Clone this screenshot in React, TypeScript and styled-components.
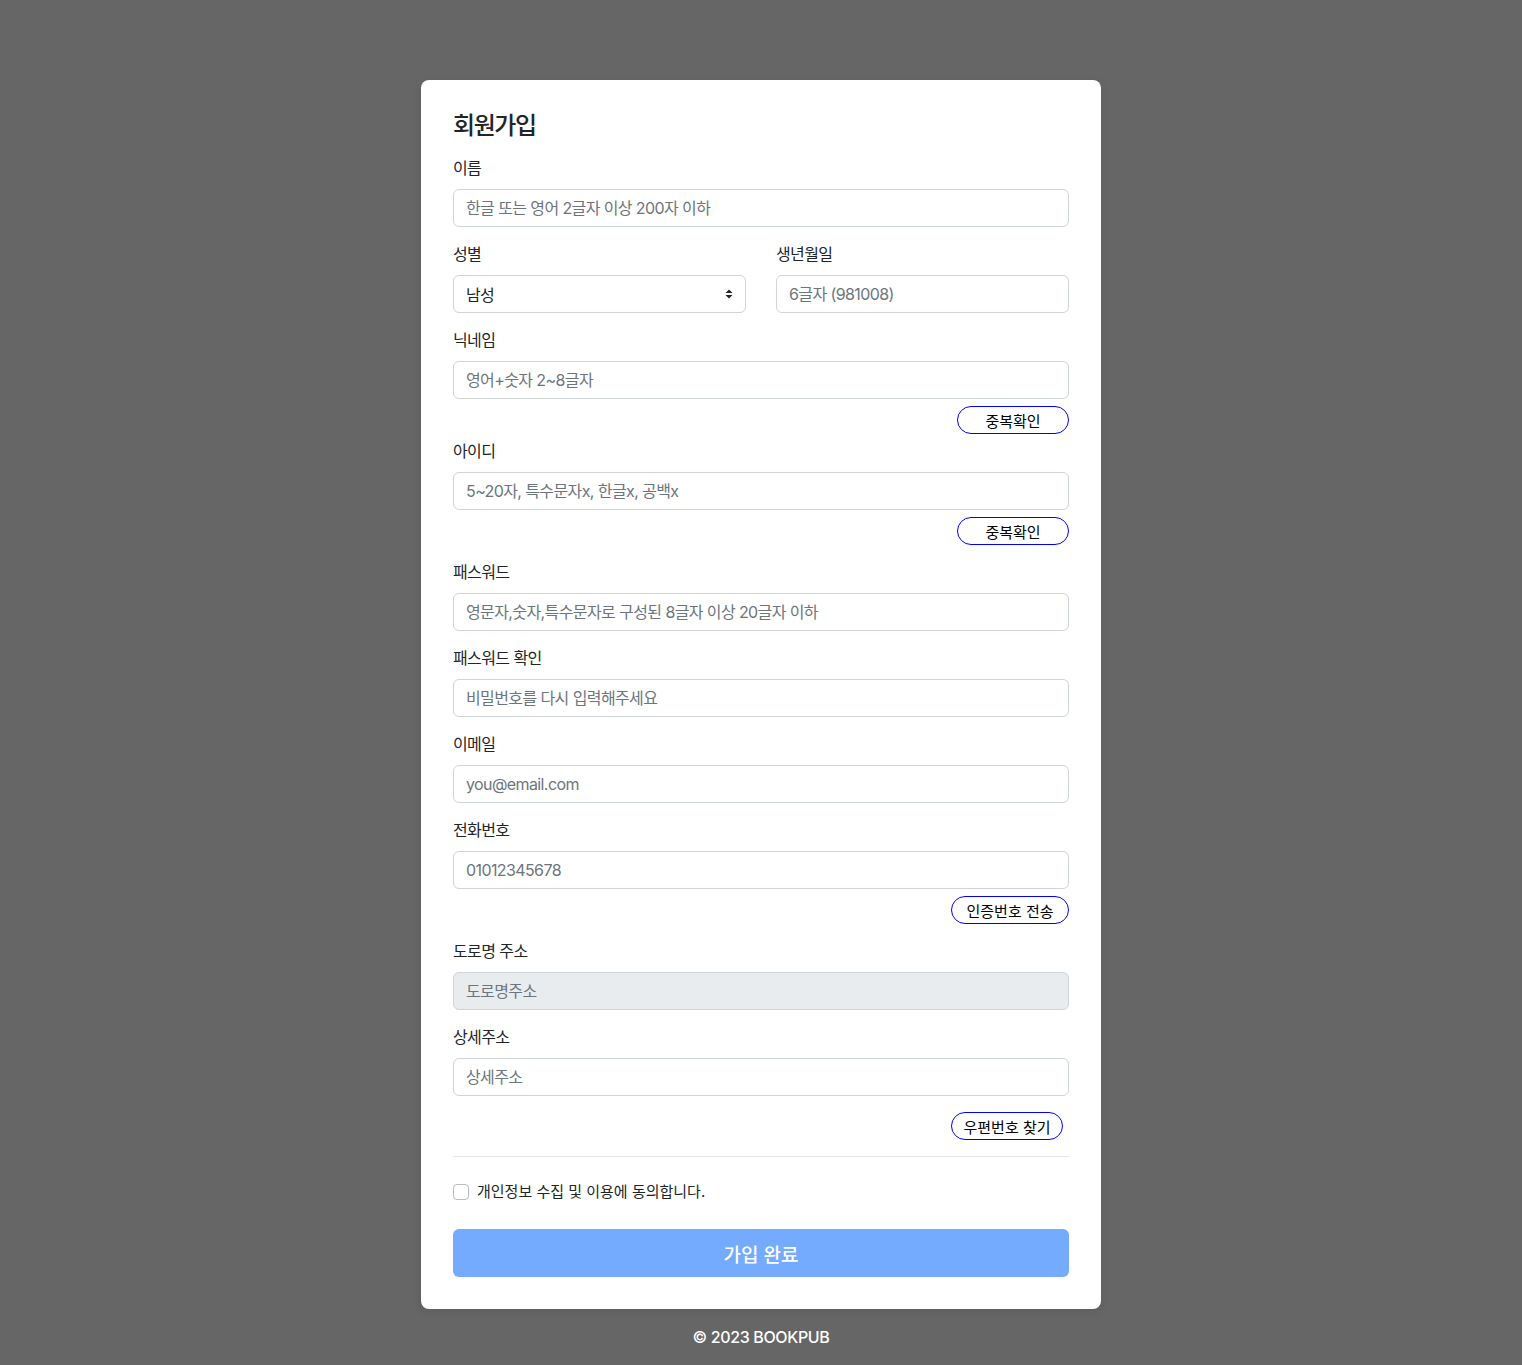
import React from "react";
import styled, { createGlobalStyle } from "styled-components";

const GlobalStyle = createGlobalStyle`
  * { box-sizing: border-box; }
  body {
    margin: 0;
    background: #666666;
    font-family: "Inter", "Noto Sans CJK KR", sans-serif;
    color: #212529;
  }
`;

const Page = styled.div`
  min-height: 1365px;
  padding-top: 80px;
  display: flex;
  flex-direction: column;
  align-items: center;
`;

const Card = styled.form`
  width: 680px;
  background: #fff;
  border-radius: 8px;
  padding: 31px 32px 32px;
  display: flex;
  flex-direction: column;
  box-shadow: 0 2px 8px rgba(0, 0, 0, 0.1);
`;

const Title = styled.h4`
  margin: 0 0 16px;
  font-size: 24px;
  font-weight: 500;
  line-height: 29px;
  letter-spacing: -1.4px;
`;

const Field = styled.div<{ $mb?: number }>`
  display: flex;
  flex-direction: column;
  margin-bottom: ${(p) => (p.$mb ?? 15)}px;
`;

const Label = styled.label`
  font-size: 16px;
  line-height: 24px;
  margin-bottom: 9px;
  letter-spacing: -0.6px;
`;

const Input = styled.input`
  height: 38px;
  width: 100%;
  border: 1px solid #ced4da;
  border-radius: 6px;
  padding: 0 12px;
  font-family: inherit;
  font-size: 16px;
  letter-spacing: -0.6px;
  color: #212529;
  background: ${(p) => (p.disabled ? "#e9ecef" : "#fff")};
  &::placeholder { color: #6c757d; }
`;

const SelectBox = styled.div`
  position: relative;
  height: 38px;
  border: 1px solid #ced4da;
  border-radius: 6px;
  padding: 0 12px;
  display: flex;
  align-items: center;
  justify-content: space-between;
  font-size: 16px;
  letter-spacing: -0.6px;
`;

const Row = styled.div`
  display: grid;
  grid-template-columns: 1fr 1fr;
  column-gap: 30px;
`;

const BtnRow = styled.div<{ $pr?: number; $mt?: number }>`
  display: flex;
  justify-content: flex-end;
  padding-right: ${(p) => p.$pr ?? 0}px;
  margin-top: ${(p) => p.$mt ?? 7}px;
`;

const PillButton = styled.button<{ $w: number }>`
  width: ${(p) => p.$w}px;
  height: 28px;
  border: 1px solid #0000ff;
  border-radius: 14px;
  background: #fff;
  color: #000;
  font-family: inherit;
  font-size: 15px;
  padding: 0;
`;

const Divider = styled.hr`
  border: 0;
  border-top: 1px solid #e5e5e5;
  margin: 16px 0 23px;
`;

const CheckRow = styled.label`
  display: flex;
  align-items: center;
  gap: 8px;
  font-size: 15px;
  line-height: 24px;
`;

const Check = styled.span`
  width: 16px;
  height: 16px;
  border: 1px solid #b8bdc3;
  border-radius: 4px;
`;

const Submit = styled.button`
  margin-top: 25px;
  height: 48px;
  border: 0;
  border-radius: 6px;
  background: #74abff;
  color: #fff;
  font-family: inherit;
  font-size: 19px;
  font-weight: 500;
`;

const Footer = styled.div`
  margin-top: 16px;
  color: #fff;
  font-size: 16px;
  font-weight: 500;
  line-height: 24px;
  letter-spacing: -0.35px;
`;

const Arrows = () => (
  <svg width="8" height="10" viewBox="0 0 8 10">
    <path d="M4 0.5 L7.5 4 L0.5 4 Z M4 9.5 L7.5 6 L0.5 6 Z" fill="#222" />
  </svg>
);

export default function App() {
  return (
    <>
      <GlobalStyle />
      <Page>
        <Card onSubmit={(e) => e.preventDefault()}>
          <Title>회원가입</Title>
          <Field>
            <Label>이름</Label>
            <Input placeholder="한글 또는 영어 2글자 이상 200자 이하" />
          </Field>
          <Row>
            <Field>
              <Label>성별</Label>
              <SelectBox>
                <span>남성</span>
                <Arrows />
              </SelectBox>
            </Field>
            <Field>
              <Label>생년월일</Label>
              <Input placeholder="6글자 (981008)" />
            </Field>
          </Row>
          <Field $mb={5}>
            <Label>닉네임</Label>
            <Input placeholder="영어+숫자 2~8글자" />
            <BtnRow>
              <PillButton type="button" $w={112}>중복확인</PillButton>
            </BtnRow>
          </Field>
          <Field $mb={15}>
            <Label>아이디</Label>
            <Input placeholder="5~20자, 특수문자x, 한글x, 공백x" />
            <BtnRow>
              <PillButton type="button" $w={112}>중복확인</PillButton>
            </BtnRow>
          </Field>
          <Field>
            <Label>패스워드</Label>
            <Input type="password" placeholder="영문자,숫자,특수문자로 구성된 8글자 이상 20글자 이하" />
          </Field>
          <Field>
            <Label>패스워드 확인</Label>
            <Input type="password" placeholder="비밀번호를 다시 입력해주세요" />
          </Field>
          <Field>
            <Label>이메일</Label>
            <Input placeholder="you@email.com" />
          </Field>
          <Field>
            <Label>전화번호</Label>
            <Input placeholder="01012345678" />
            <BtnRow>
              <PillButton type="button" $w={118}>인증번호 전송</PillButton>
            </BtnRow>
          </Field>
          <Field>
            <Label>도로명 주소</Label>
            <Input disabled placeholder="도로명주소" />
          </Field>
          <Field $mb={0}>
            <Label>상세주소</Label>
            <Input placeholder="상세주소" />
            <BtnRow $pr={6} $mt={16}>
              <PillButton type="button" $w={112}>우편번호 찾기</PillButton>
            </BtnRow>
          </Field>
          <Divider />
          <CheckRow>
            <Check />
            개인정보 수집 및 이용에 동의합니다.
          </CheckRow>
          <Submit type="submit">가입 완료</Submit>
        </Card>
        <Footer>© 2023 BOOKPUB</Footer>
      </Page>
    </>
  );
}
